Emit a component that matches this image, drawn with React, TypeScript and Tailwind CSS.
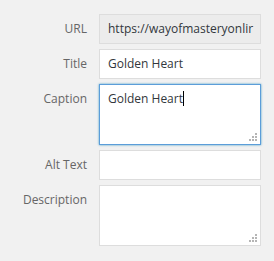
import React from "react";

function Grip() {
  return (
    <svg className="absolute right-[3px] bottom-[3px]" width="9" height="9" viewBox="0 0 9 9">
      <g fill="#b5b5b5">
        <rect x="7" y="1" width="2" height="2" />
        <rect x="4" y="4" width="2" height="2" />
        <rect x="7" y="4" width="2" height="2" />
        <rect x="1" y="7" width="2" height="2" />
        <rect x="4" y="7" width="2" height="2" />
        <rect x="7" y="7" width="2" height="2" />
      </g>
    </svg>
  );
}

function Row({ label, children }: { label: string; children: React.ReactNode }) {
  return (
    <div className="flex items-start">
      <div className="w-[87px] shrink-0 text-right text-[12px] leading-[30px] text-[#666]">{label}</div>
      <div className="ml-[12px]">{children}</div>
    </div>
  );
}

export default function App() {
  return (
    <div
      className="h-[261px] w-[274px] bg-[#f1f1f1] pt-[14px]"
      style={{ fontFamily: '"Open Sans", "Noto Sans", sans-serif' }}
    >
      <div className="flex flex-col gap-[5px]">
        <Row label="URL">
          <div className="h-[30px] w-[162px] border border-[#dddddd] bg-[#ececec] pl-[8px] pr-[2px]">
            <div className="overflow-hidden whitespace-nowrap text-[12px] leading-[28px] text-[#32373c]">
              https://wayofmasteryonlir
            </div>
          </div>
        </Row>
        <Row label="Title">
          <div className="h-[30px] w-[162px] overflow-hidden whitespace-nowrap border border-[#dddddd] bg-white px-[8px] text-[12px] leading-[28px] text-[#32373c]">
            Golden Heart
          </div>
        </Row>
        <Row label="Caption">
          <div className="relative h-[61px] w-[162px] border border-[#5b9dd9] bg-white px-[8px] text-[12px] leading-[28px] text-[#32373c] shadow-[0_0_2px_rgba(30,140,190,0.8)]">
            <span>Golden Heart</span>
            <span className="inline-block h-[15px] w-[1px] bg-black align-[-3px]" />
            <Grip />
          </div>
        </Row>
        <Row label="Alt Text">
          <div className="h-[30px] w-[162px] border border-[#dddddd] bg-white" />
        </Row>
        <Row label="Description">
          <div className="relative h-[61px] w-[162px] border border-[#dddddd] bg-white">
            <Grip />
          </div>
        </Row>
      </div>
    </div>
  );
}
